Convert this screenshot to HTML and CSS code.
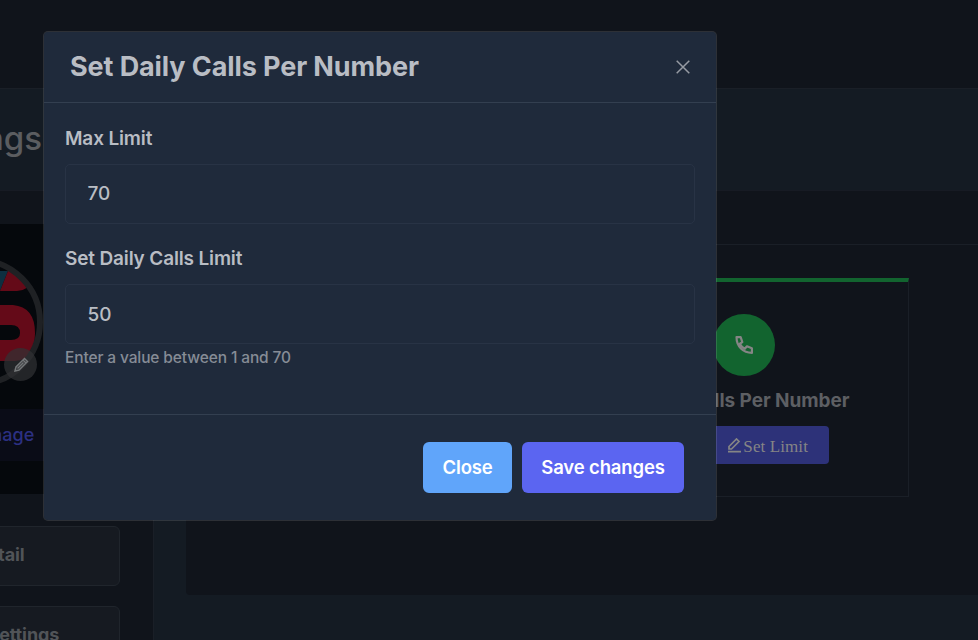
FILE: index.html
```html
<!DOCTYPE html>
<html lang="en">
<head>
<meta charset="utf-8">
<title>Settings</title>
<link rel="stylesheet" href="styles.css">
</head>
<body>
<div class="page">
  <header class="topbar"></header>
  <div class="heading"><h1>Settings</h1></div>
  <div class="columns">
    <aside class="sidebar">
      <div class="profile">
        <div class="avatar">
          <svg viewBox="0 0 130 130" width="130" height="130">
            <defs><clipPath id="round"><circle cx="65" cy="65" r="60"/></clipPath></defs>
            <g clip-path="url(#round)">
              <rect width="130" height="130" fill="#05080c"/>
              <path d="M60 14H95L87 34H60z" fill="#0d2f40"/>
              <path d="M95 14H120V22Q115 34 104 34H87z" fill="#640a18"/>
              <path d="M60 48H100Q122 50 122 76Q122 103 102 104H60V83H98Q107 83 107 76Q107 68 98 68H60z" fill="#640a18"/>
            </g>
            <circle cx="65" cy="65" r="62" fill="none" stroke="#1f2124" stroke-width="6"/>
          </svg>
          <span class="edit">
            <svg viewBox="0 0 16 16" width="16" height="16"><path d="M2 14l1-4L11.500 1.500l3 3L6 13zM10 3l3 3M4.500 11.500l6-6" fill="none" stroke="#747779" stroke-width="1.500"/></svg>
          </span>
        </div>
        <div class="change">Change Image</div>
      </div>
      <nav class="menu">
        <a class="item">User Detail</a>
        <a class="item wide">Account Settings</a>
      </nav>
    </aside>
    <main class="content">
      <section class="panel">
        <div class="panel-head"></div>
        <div class="tile">
          <div class="disc">
            <svg viewBox="0 0 24 24" width="20" height="20"><path d="M3 2.500h5l2 6-3 2a13 13 0 0 0 6 6l2.500-3 6 2.500v5.500C11 21.500 3 14 3 2.500z" fill="none" stroke="#858585" stroke-width="2.600" stroke-linejoin="round"/></svg>
          </div>
          <h3>Daily Calls Per Number</h3>
          <div class="limit">
            <svg viewBox="0 0 14 15" width="14" height="15"><path d="M1 11V8.500L8.500 1l2.500 2.500L3.500 11zM0 13.700h13" fill="none" stroke="#858585" stroke-width="1.700"/></svg>
            <span>Set Limit</span>
          </div>
        </div>
      </section>
    </main>
  </div>
</div>
<div class="modal">
  <div class="modal-head">
    <h2>Set Daily Calls Per Number</h2>
    <svg class="x" viewBox="0 0 14 14" width="14" height="14"><path d="M.7.7l12.600 12.600M13.300.7L.7 13.300" stroke="#969ba3" stroke-width="1.500" fill="none"/></svg>
  </div>
  <div class="modal-body">
    <label>Max Limit</label>
    <div class="field">70</div>
    <label>Set Daily Calls Limit</label>
    <div class="field low">50</div>
    <small>Enter a value between 1 and 70</small>
  </div>
  <div class="modal-foot">
    <button class="btn close">Close</button>
    <button class="btn save">Save changes</button>
  </div>
</div>
</body>
</html>
```

FILE: styles.css
```css
* { box-sizing: border-box; }
html { overflow: hidden; }
body {
  margin: 0;
  width: 978px;
  height: 640px;
  overflow: hidden;
  background: #10141b;
  font-family: Inter, "Liberation Sans", sans-serif;
  font-weight: 500;
  color: #b9bdc4;
}
h1, h2, h3 { margin: 0; white-space: nowrap; }
.page {
  display: flex;
  flex-direction: column;
  width: 1175px;
  height: 640px;
  margin-left: -197px;
  overflow: hidden;
}
.topbar { height: 88px; flex: none; }
.heading {
  display: flex;
  align-items: center;
  justify-content: flex-end;
  height: 103px;
  flex: none;
  padding: 0 936px 4px 0;
  background: #141b23;
  border-top: 1px solid #1a1f27;
  border-bottom: 1px solid #171b24;
}
.heading h1 { font-size: 33px; line-height: 40px; font-weight: 500; color: #5b5d60; }
.columns { display: flex; flex: 1; min-height: 0; }
.sidebar {
  width: 351px;
  flex: none;
  padding-top: 33px;
  border-right: 1px solid #1a1f27;
}
.profile {
  display: flex;
  flex-direction: column;
  align-items: center;
  height: 270px;
  padding-top: 33px;
  background: #05080c;
}
.avatar { position: relative; width: 130px; height: 130px; }
.avatar > svg { display: block; }
.edit {
  position: absolute;
  right: 6px;
  bottom: 6px;
  display: flex;
  align-items: center;
  justify-content: center;
  width: 33px;
  height: 33px;
  border-radius: 50%;
  background: rgba(48, 50, 53, .7);
}
.change {
  align-self: stretch;
  margin-top: 22px;
  height: 52px;
  padding-right: 12px;
  line-height: 52px;
  text-align: center;
  font-size: 18px;
  font-weight: 500;
  color: #2c3082;
  background: #0a0c17;
}
.menu {
  display: flex;
  flex-direction: column;
  gap: 20px;
  padding: 32px 33px 0;
}
.item {
  height: 60px;
  flex: none;
  padding-right: 2px;
  line-height: 56px;
  text-align: center;
  font-size: 18px;
  font-weight: 650;
  letter-spacing: -.1px;
  color: #515458;
  background: #161a21;
  border: 1px solid #20252c;
  border-radius: 6px;
}
.wide { padding: 0 0 0 13px; }
.content { flex: 1; min-width: 0; padding-left: 32px; background: #141b23; }
.panel {
  height: 404px;
  background: #10141b;
  border-radius: 0 0 0 4px;
}
.panel-head { height: 54px; border-bottom: 1px solid #1a1f27; }
.tile {
  display: flex;
  flex-direction: column;
  align-items: center;
  width: 330px;
  height: 219px;
  margin: 33px 0 0 393px;
  padding-top: 32px;
  border: 1px solid #1a1f27;
  border-top: 4px solid #12642f;
}
.disc {
  display: flex;
  align-items: center;
  justify-content: center;
  width: 62px;
  height: 62px;
  border-radius: 50%;
  background: #12642f;
}
.tile h3 { margin-top: 13px; font-size: 19px; line-height: 24px; font-weight: 650; letter-spacing: -.05px; color: #5d5f63; }
.limit {
  display: flex;
  align-items: center;
  justify-content: flex-end;
  gap: 1px;
  width: 170px;
  height: 38px;
  margin-top: 13px;
  padding: 3px 21px 0 0;
  border-radius: 4px;
  background: #2d3279;
  color: #858585;
  font: 400 17px/24px "Liberation Serif", serif;
  letter-spacing: .1px;
}
.limit svg { margin-top: -3px; }
.modal {
  position: absolute;
  left: 43px;
  top: 31px;
  width: 674px;
  height: 490px;
  display: flex;
  flex-direction: column;
  background: #1f2a3b;
  background-clip: padding-box;
  border: 1px solid rgba(255, 255, 255, .12);
  border-radius: 5px;
}
.modal-head {
  display: flex;
  align-items: center;
  justify-content: space-between;
  height: 71px;
  padding: 0 26.500px 1px 26px;
  border-bottom: 1px solid #333f50;
}
.modal-head h2 { font-size: 27px; line-height: 34px; font-weight: 650; letter-spacing: -.1px; }
.modal-head .x { margin-top: 0; }
.modal-body { display: flex; flex-direction: column; height: 311px; padding: 23px 21px 0; }
.modal-body label { font-size: 19px; line-height: 25px; font-weight: 600; letter-spacing: -.15px; margin-bottom: 13px; }
.field {
  height: 60px;
  margin-bottom: 22px;
  padding-left: 21.500px;
  border: 1px solid #283345;
  border-radius: 5px;
  font-size: 19px;
  line-height: 58px;
  font-weight: 500;
}
.low { line-height: 60px; }
.field + small { margin-top: -19px; }
.modal-body small { font-size: 15.500px; line-height: 22px; font-weight: 500; letter-spacing: -.12px; color: #868c96; }
.modal-foot {
  display: flex;
  justify-content: flex-end;
  gap: 10px;
  flex: 1;
  padding: 27px 32px 0 0;
  border-top: 1px solid #333f50;
}
.btn {
  height: 51px;
  padding: 0 0 2px;
  border: 0;
  border-radius: 6px;
  color: #fff;
  font: 600 18.500px/24px Inter, "Liberation Sans", sans-serif;
  letter-spacing: -.15px;
}
.close { width: 89px; background: #60a5fa; }
.save { width: 162px; background: #5b65f1; }
```
